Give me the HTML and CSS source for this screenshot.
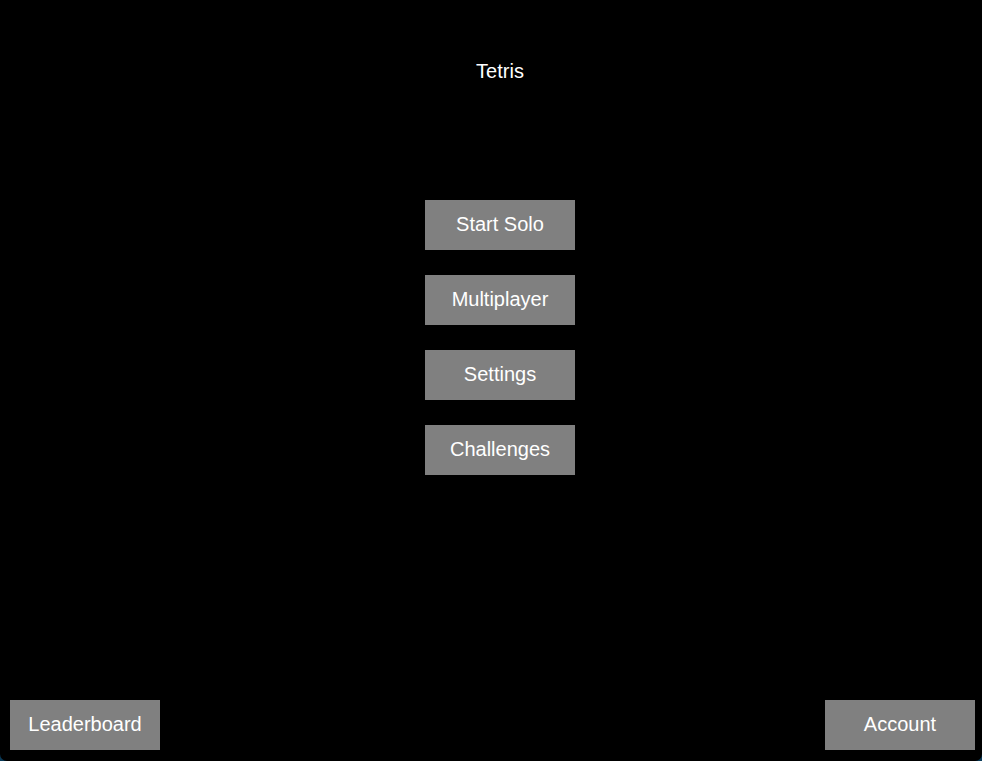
FILE: index.html
```
<!DOCTYPE html>
<html lang="en">
<head>
<meta charset="utf-8">
<title>Tetris</title>
<link rel="stylesheet" href="styles.css">
</head>
<body>
<div class="stage">
  <h1 class="title">Tetris</h1>
  <nav class="menu">
    <button class="btn">Start Solo</button>
    <button class="btn">Multiplayer</button>
    <button class="btn">Settings</button>
    <button class="btn">Challenges</button>
  </nav>
  <div class="bottom">
    <button class="btn">Leaderboard</button>
    <button class="btn">Account</button>
  </div>
</div>
</body>
</html>
```
FILE: styles.css
```
html, body {
  margin: 0;
  padding: 0;
  width: 982px;
  height: 761px;
  overflow: hidden;
  background: #0a3a58;
}
.stage {
  width: 1000px;
  height: 761px;
  background: #000;
  display: flex;
  flex-direction: column;
  align-items: center;
  font-family: "Liberation Sans", Arial, sans-serif;
  color: #fff;
  box-sizing: border-box;
  clip-path: inset(0 18px 0 0 round 0 0 7px 7px);
}
.title {
  margin: 60px 0 0 0;
  font-size: 20px;
  font-weight: normal;
  line-height: 23px;
  height: 23px;
}
.menu {
  margin-top: 117px;
  display: flex;
  flex-direction: column;
  gap: 25px;
}
.btn {
  width: 150px;
  height: 50px;
  background: #808080;
  color: #fff;
  border: none;
  padding: 0 0 1px 0;
  margin: 0;
  box-sizing: border-box;
  font-family: "Liberation Sans", Arial, sans-serif;
  font-size: 20px;
  line-height: 23px;
  display: flex;
  align-items: center;
  justify-content: center;
}
.bottom {
  margin-top: auto;
  margin-bottom: 11px;
  width: 1000px;
  box-sizing: border-box;
  padding: 0 25px 0 10px;
  display: flex;
  justify-content: space-between;
}
```
